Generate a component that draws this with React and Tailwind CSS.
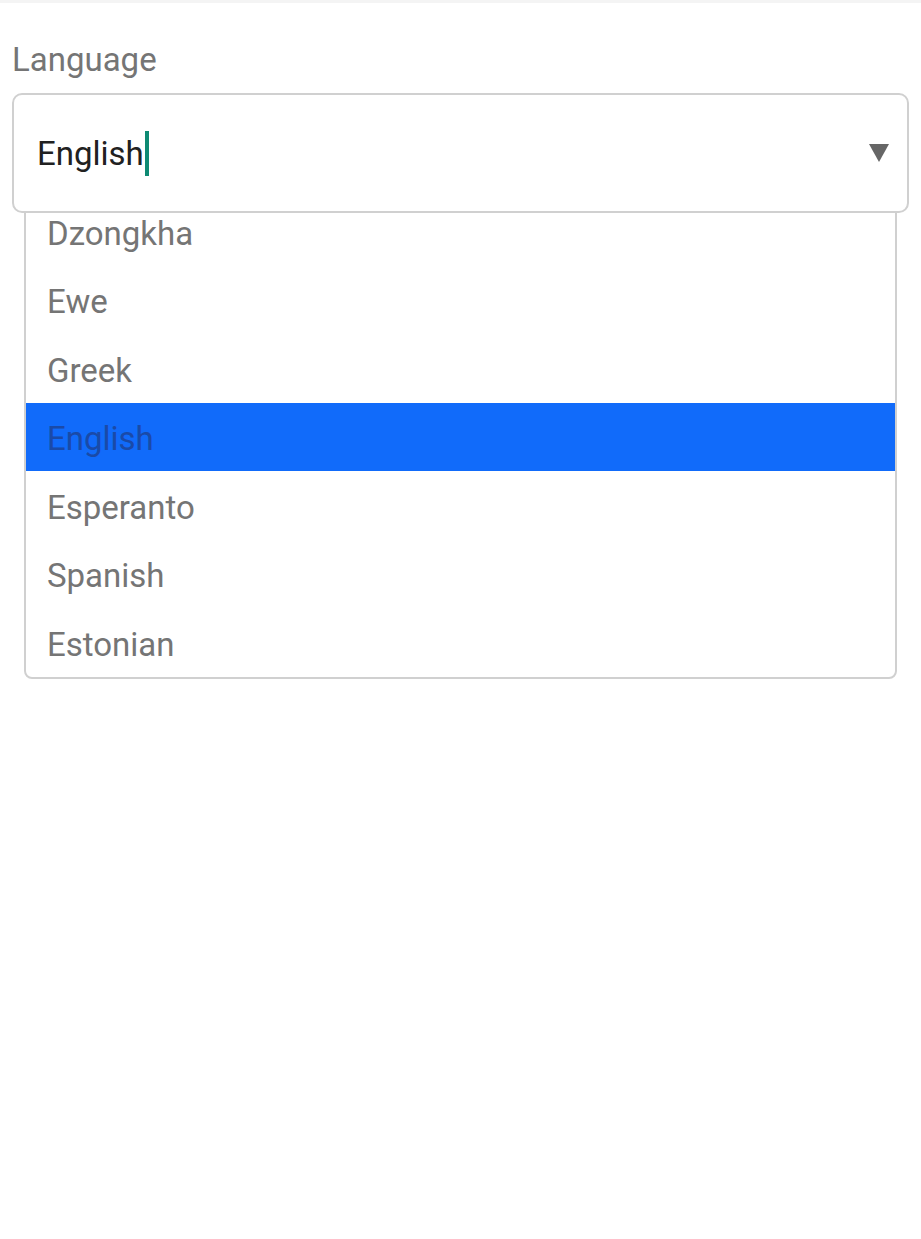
import React from 'react'

const languages = ['Dzongkha', 'Ewe', 'Greek', 'English', 'Esperanto', 'Spanish', 'Estonian']

export default function App() {
  const selected = 'English'

  return (
    <div className="min-h-[1239px] w-full bg-white font-['Roboto',sans-serif]">
      {/* top status strip */}
      <div className="h-[3px] w-full bg-[#f4f4f4]" />

      <div className="px-3 pt-[37px]">
        <label className="block text-[33px] leading-[40px] text-[#757575]">Language</label>

        {/* select input */}
        <div className="mt-[13px] flex h-[120px] items-center justify-between rounded-[10px] border-2 border-[#d0d0d0] pr-[18px] pl-[23px]">
          <div className="flex items-center">
            <span className="text-[33px] leading-none text-[#212121]">English</span>
            <span className="ml-[1px] h-[45px] w-[4px] bg-[#0e8a73]" />
          </div>
          <svg width="20" height="18" viewBox="0 0 20 18">
            <path d="M0 0 L20 0 L10 18 Z" fill="#666" />
          </svg>
        </div>

        {/* dropdown list */}
        <div className="mx-[12px] -mt-[2px] h-[468px] overflow-hidden rounded-b-[8px] border-2 border-[#d0d0d0] bg-white">
          <ul className="-mt-[16px]">
            {languages.map((lang) => (
              <li
                key={lang}
                className={
                  lang === selected
                    ? 'flex h-[68.5px] items-center bg-[#116bfa] pt-[4px] pl-[21px] text-[33px] text-[#1a4aa8]'
                    : 'flex h-[68.5px] items-center pt-[4px] pl-[21px] text-[33px] text-[#757575]'
                }
              >
                {lang}
              </li>
            ))}
          </ul>
        </div>
      </div>
    </div>
  )
}
